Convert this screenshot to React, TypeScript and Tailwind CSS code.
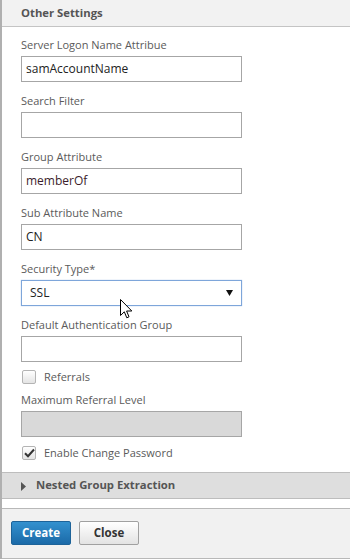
function Field({ label, value, valueClass = "text-[#222]" }: { label: string; value?: string; valueClass?: string }) {
  return (
    <div className="mt-[10px] first:mt-0">
      <div className="h-[18px] mb-[2px] text-[11px] leading-[18px] text-[#5a5a5a]">{label}</div>
      <div className={`w-[221px] h-[26px] border border-[#a6a6a6] bg-white px-[4px] text-[12px] leading-[24px] ${valueClass}`}>
        {value}
      </div>
    </div>
  );
}

function Checkbox({ checked, label }: { checked?: boolean; label: string }) {
  return (
    <div className="flex items-center h-[18px] text-[11px] text-[#5a5a5a]">
      <span className="ml-[1px] w-[14px] h-[14px] rounded-[2px] border border-[#b4b4b4] bg-gradient-to-b from-[#ffffff] to-[#e4e4e4] flex items-center justify-center">
        {checked && (
          <svg width="11" height="10" viewBox="0 0 11 10">
            <path d="M1 5.2 L4 8.2 L10 1.5" fill="none" stroke="#333" strokeWidth="2" />
          </svg>
        )}
      </span>
      <span className="ml-[8px]">{label}</span>
    </div>
  );
}

export default function App() {
  return (
    <div className="relative w-[350px] h-[560px] overflow-hidden bg-white font-['Open_Sans',sans-serif]">
      <div className="border-l-2 border-[#b0b0b0]">
        <div className="h-[27px] bg-[#f2f2f2] border-b border-[#c4c4c4] pl-[19px] flex items-center">
          <span className="text-[11.3px] font-bold text-[#555]">Other Settings</span>
        </div>

        <div className="pl-[19px] pt-[9px]">
          <Field label="Server Logon Name Attribue" value="samAccountName" />
          <Field label="Search Filter" />
          <Field label="Group Attribute" value="memberOf" valueClass="text-[#3b1d2c]" />
          <Field label="Sub Attribute Name" value="CN" />

          <div className="mt-[10px]">
            <div className="h-[18px] mb-[2px] text-[11px] leading-[18px] text-[#5a5a5a]">Security Type*</div>
            <div className="w-[221px] h-[26px] border border-[#7ea6da] bg-white pl-[8px] pr-[8px] flex items-center justify-between text-[12px] text-[#222] shadow-[0_0_1px_#9fbde6]">
              <span>SSL</span>
              <svg width="7" height="6" viewBox="0 0 7 6">
                <path d="M0 0 H7 L3.5 6 Z" fill="#111" />
              </svg>
            </div>
          </div>

          <Field label="Default Authentication Group" />

          <div className="mt-[6px]">
            <Checkbox label="Referrals" />
          </div>

          <div className="mt-[5px]">
            <div className="h-[18px] mb-[2px] text-[11px] leading-[18px] text-[#5a5a5a]">Maximum Referral Level</div>
            <div className="w-[221px] h-[26px] border border-[#a6a6a6] bg-[#d9d9d9]" />
          </div>

          <div className="mt-[7px]">
            <Checkbox checked label="Enable Change Password" />
          </div>
        </div>

        <div className="mt-[10px] h-[27px] bg-[#dedede] border-y border-[#bdbdbd] pl-[19px] flex items-center">
          <svg width="5" height="9" viewBox="0 0 5 9" className="mt-[2px]">
            <path d="M0 0 L5 4.5 L0 9 Z" fill="#555" />
          </svg>
          <span className="ml-[10px] text-[11.3px] font-bold text-[#555]">Nested Group Extraction</span>
        </div>

        <div className="h-[9px]" />

        <div className="h-[51px] bg-[#f1f1f1] border-y border-[#b8b8b8] pl-[9px] pt-[12px] flex items-start gap-[8px]">
          <button className="w-[60px] h-[24px] rounded-[2px] border border-[#1d6399] bg-gradient-to-b from-[#3391cf] to-[#1b6aa8] text-[11.5px] font-bold text-white">
            Create
          </button>
          <button className="w-[60px] h-[24px] rounded-[2px] border border-[#a0a0a0] bg-gradient-to-b from-[#ffffff] to-[#e3e3e3] text-[11.5px] font-bold text-[#333]">
            Close
          </button>
        </div>
      </div>

      <svg className="absolute left-[120px] top-[299px]" width="13" height="21" viewBox="0 0 13 21">
        <path d="M0.5 0.5 L0.5 16.5 L4.3 12.8 L6.8 18.8 L9 17.8 L6.6 12 L11.8 12 Z" fill="#fff" stroke="#000" strokeWidth="1" strokeLinejoin="miter" />
      </svg>
    </div>
  );
}
